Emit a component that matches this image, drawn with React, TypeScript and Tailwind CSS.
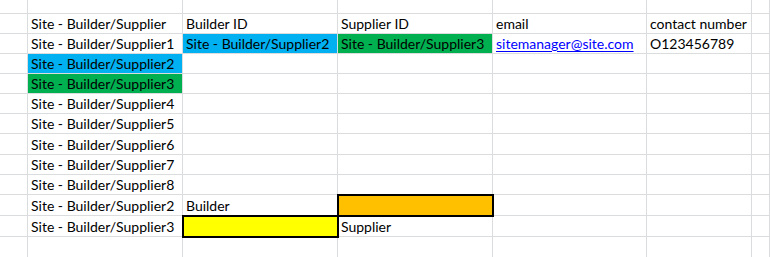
import React from "react";

type Cell = {
  text?: string;
  fill?: string;
  link?: boolean;
  boxed?: boolean;
};

const cols = ["w-[28px]", "w-[155px]", "w-[155px]", "w-[155px]", "w-[154px]", "w-[105px]", "flex-1"];

const rows: { h: string; cells: Cell[] }[] = [
  { h: "h-[20px]", cells: [{}, { text: "Site - Builder/Supplier" }, { text: "Builder ID" }, { text: "Supplier ID" }, { text: "email" }, { text: "contact number" }, {}] },
  {
    h: "h-[20px]",
    cells: [
      {},
      { text: "Site - Builder/Supplier1" },
      { text: "Site - Builder/Supplier2", fill: "blue" },
      { text: "Site - Builder/Supplier3", fill: "green" },
      { text: "sitemanager@site.com", link: true },
      { text: "O123456789" },
      {},
    ],
  },
  { h: "h-[20px]", cells: [{}, { text: "Site - Builder/Supplier2", fill: "blue" }, {}, {}, {}, {}, {}] },
  { h: "h-[20px]", cells: [{}, { text: "Site - Builder/Supplier3", fill: "green" }, {}, {}, {}, {}, {}] },
  { h: "h-[20px]", cells: [{}, { text: "Site - Builder/Supplier4" }, {}, {}, {}, {}, {}] },
  { h: "h-[20px]", cells: [{}, { text: "Site - Builder/Supplier5" }, {}, {}, {}, {}, {}] },
  { h: "h-[21px]", cells: [{}, { text: "Site - Builder/Supplier6" }, {}, {}, {}, {}, {}] },
  { h: "h-[20px]", cells: [{}, { text: "Site - Builder/Supplier7" }, {}, {}, {}, {}, {}] },
  { h: "h-[20px]", cells: [{}, { text: "Site - Builder/Supplier8" }, {}, {}, {}, {}, {}] },
  { h: "h-[21px]", cells: [{}, { text: "Site - Builder/Supplier2" }, { text: "Builder" }, { fill: "orange", boxed: true }, {}, {}, {}] },
  { h: "h-[21px]", cells: [{}, { text: "Site - Builder/Supplier3" }, { fill: "yellow", boxed: true }, { text: "Supplier" }, {}, {}, {}] },
  { h: "h-[30px]", cells: [{}, {}, {}, {}, {}, {}, {}] },
];

const fills: Record<string, string> = {
  blue: "bg-[#00b0f0] border-[#00b0f0]",
  green: "bg-[#00b050] border-[#00b050]",
  orange: "bg-[#ffc000]",
  yellow: "bg-[#ffff00]",
};

function GridCell({ cell, w }: { cell: Cell; w: string }) {
  const base = cell.fill ? fills[cell.fill] : "border-[#dadcdd]";
  const box = cell.boxed ? "relative z-10 outline-2 outline-black -outline-offset-1" : "";
  return (
    <div className={`${w} shrink-0 border-r border-b border-[#dadcdd] ${base} ${box} flex items-end pl-[3px] overflow-visible whitespace-nowrap`}>
      {cell.text &&
        (cell.link ? (
          <span className="text-[#0000ff] underline underline-offset-2">{cell.text}</span>
        ) : (
          <span>{cell.text}</span>
        ))}
    </div>
  );
}

export default function App() {
  return (
    <div className="w-[770px] h-[257px] overflow-hidden bg-white text-black font-['Lato',sans-serif] text-[14px] leading-[18px]">
      <div className="flex h-[14px]">
        {cols.map((w, i) => (
          <div key={i} className={`${w} shrink-0 border-r border-b border-[#dadcdd]`} />
        ))}
      </div>
      {rows.map((row, r) => (
        <div key={r} className={`flex ${row.h}`}>
          {row.cells.map((cell, c) => (
            <GridCell key={c} cell={cell} w={cols[c]} />
          ))}
        </div>
      ))}
    </div>
  );
}
